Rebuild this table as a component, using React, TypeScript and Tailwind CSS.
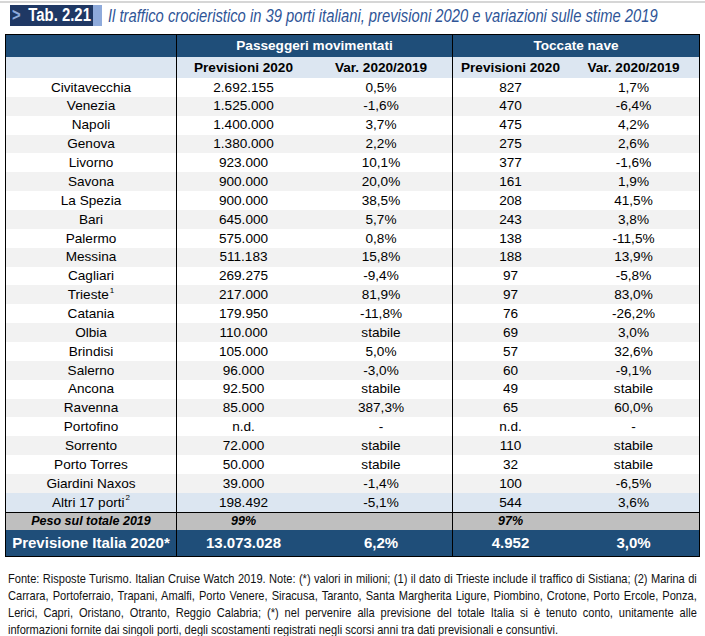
import React from "react";

const rows = [
  ["Civitavecchia", "2.692.155", "0,5%", "827", "1,7%"],
  ["Venezia", "1.525.000", "-1,6%", "470", "-6,4%"],
  ["Napoli", "1.400.000", "3,7%", "475", "4,2%"],
  ["Genova", "1.380.000", "2,2%", "275", "2,6%"],
  ["Livorno", "923.000", "10,1%", "377", "-1,6%"],
  ["Savona", "900.000", "20,0%", "161", "1,9%"],
  ["La Spezia", "900.000", "38,5%", "208", "41,5%"],
  ["Bari", "645.000", "5,7%", "243", "3,8%"],
  ["Palermo", "575.000", "0,8%", "138", "-11,5%"],
  ["Messina", "511.183", "15,8%", "188", "13,9%"],
  ["Cagliari", "269.275", "-9,4%", "97", "-5,8%"],
  ["Trieste|1", "217.000", "81,9%", "97", "83,0%"],
  ["Catania", "179.950", "-11,8%", "76", "-26,2%"],
  ["Olbia", "110.000", "stabile", "69", "3,0%"],
  ["Brindisi", "105.000", "5,0%", "57", "32,6%"],
  ["Salerno", "96.000", "-3,0%", "60", "-9,1%"],
  ["Ancona", "92.500", "stabile", "49", "stabile"],
  ["Ravenna", "85.000", "387,3%", "65", "60,0%"],
  ["Portofino", "n.d.", "-", "n.d.", "-"],
  ["Sorrento", "72.000", "stabile", "110", "stabile"],
  ["Porto Torres", "50.000", "stabile", "32", "stabile"],
  ["Giardini Naxos", "39.000", "-1,4%", "100", "-6,5%"],
  ["Altri 17 porti|2", "198.492", "-5,1%", "544", "3,6%"],
];

const footer = [
  "Fonte: Risposte Turismo. Italian Cruise Watch 2019. Note: (*) valori in milioni; (1) il dato di Trieste include il traffico di Sistiana; (2) Marina di",
  "Carrara, Portoferraio, Trapani, Amalfi, Porto Venere, Siracusa, Taranto, Santa Margherita Ligure, Piombino, Crotone, Porto Ercole, Ponza,",
  "Lerici, Capri, Oristano, Otranto, Reggio Calabria; (*) nel pervenire alla previsione del totale Italia si è tenuto conto, unitamente alle",
  "informazioni fornite dai singoli porti, degli scostamenti registrati negli scorsi anni tra dati previsionali e consuntivi.",
];

const grid = "grid grid-cols-[170px_134px_142px_116px_131px]";

function PortName({ value }: { value: string }) {
  const [name, note] = value.split("|");
  return (
    <>
      {name}
      {note && <sup className="text-[8px] ml-px">{note}</sup>}
    </>
  );
}

export default function App() {
  return (
    <div className="w-[705px] h-[636px] bg-white overflow-hidden text-black [font-family:'Liberation_Sans',Arial,sans-serif]">
      <div className="h-[2px] mt-px bg-[#d6d6d6]" />

      {/* Title (condensed look of the source document) */}
      <div className="mt-[2px] h-[21px] flex items-center">
        <div className="ml-[10px] h-full flex">
          <div className="w-[83px] bg-[#1f3864] flex items-center pl-[2px] overflow-hidden">
            <span className="whitespace-nowrap font-bold text-[17.5px] leading-none origin-left scale-x-[0.85]">
              <span className="text-[#8eaadb]">&gt;</span>
              <span className="ml-[9px] text-white">Tab. 2.21</span>
            </span>
          </div>
          <div className="w-[9px] bg-[#8eaadb]" />
        </div>
        <p className="ml-[6px] italic text-[18px] leading-none text-[#2f5597] whitespace-nowrap origin-left scale-x-[0.82]">
          Il traffico crocieristico in 39 porti italiani, previsioni 2020 e variazioni sulle stime 2019
        </p>
      </div>

      {/* Table */}
      <div className="mt-[8px] ml-[5px] w-[695px] border border-black text-[13.6px] leading-none">
        <div className={`${grid} h-[22px] bg-[#1f4e79] text-white font-bold`}>
          <div />
          <div className="col-span-2 border-l border-black flex items-center justify-center">
            Passeggeri movimentati
          </div>
          <div className="col-span-2 border-l border-black flex items-center justify-center">
            Toccate nave
          </div>
        </div>
        <div className={`${grid} h-[21px] bg-[#dce6f1] font-bold`}>
          <div />
          <div className="border-l border-black flex items-center justify-center">Previsioni 2020</div>
          <div className="flex items-center justify-center">Var. 2020/2019</div>
          <div className="border-l border-black flex items-center justify-center">Previsioni 2020</div>
          <div className="flex items-center justify-center">Var. 2020/2019</div>
        </div>

        {rows.map((r, i) => {
          const bg =
            i === rows.length - 1 ? "bg-[#dce6f1]" : i % 2 === 1 ? "bg-[#f2f2f2]" : "bg-white";
          return (
            <div key={r[0]} className={`${grid} h-[18.86px] ${bg}`}>
              <div className="flex items-center justify-center">
                <PortName value={r[0]} />
              </div>
              <div className="border-l border-black flex items-center justify-center">{r[1]}</div>
              <div className="flex items-center justify-center">{r[2]}</div>
              <div className="border-l border-black flex items-center justify-center">{r[3]}</div>
              <div className="flex items-center justify-center">{r[4]}</div>
            </div>
          );
        })}

        <div className={`${grid} h-[18px] bg-[#bfbfbf] border-t border-black font-bold italic text-[12.5px]`}>
          <div className="flex items-center justify-center">Peso sul totale 2019</div>
          <div className="border-l border-black flex items-center justify-center">99%</div>
          <div />
          <div className="border-l border-black flex items-center justify-center">97%</div>
          <div />
        </div>

        <div className={`${grid} h-[26px] bg-[#1f4e79] text-white font-bold text-[15px]`}>
          <div className="flex items-center justify-center">Previsione Italia 2020*</div>
          <div className="border-l border-black flex items-center justify-center">13.073.028</div>
          <div className="flex items-center justify-center">6,2%</div>
          <div className="border-l border-black flex items-center justify-center">4.952</div>
          <div className="flex items-center justify-center">3,0%</div>
        </div>
      </div>

      {/* Notes, set condensed and justified to 689px */}
      <div className="mt-[13px] ml-[8px] w-[840px] origin-top-left scale-x-[0.82] text-[13.5px] leading-[17px] text-[#111]">
        {footer.map((line, i) => (
          <p
            key={i}
            className={
              i < footer.length - 1
                ? "whitespace-nowrap text-justify [text-align-last:justify]"
                : "whitespace-nowrap"
            }
          >
            {line}
          </p>
        ))}
      </div>
    </div>
  );
}
